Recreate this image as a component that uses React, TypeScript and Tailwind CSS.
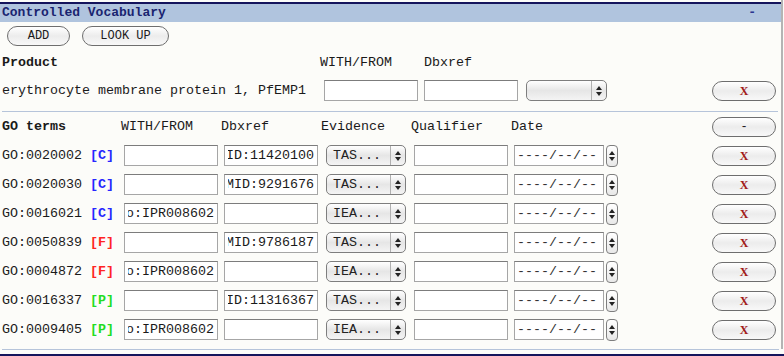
import React, { useEffect, useRef } from "react";

const mono = { fontFamily: '"Liberation Mono", "DejaVu Sans Mono", monospace' };

type Term = { id: string; aspect: "C" | "F" | "P"; withFrom: string; dbxref: string; evidence: string };

const terms: Term[] = [
  { id: "GO:0020002", aspect: "C", withFrom: "", dbxref: "PMID:11420100", evidence: "TAS..." },
  { id: "GO:0020030", aspect: "C", withFrom: "", dbxref: "PMID:9291676", evidence: "TAS..." },
  { id: "GO:0016021", aspect: "C", withFrom: "InterPro:IPR008602", dbxref: "", evidence: "IEA..." },
  { id: "GO:0050839", aspect: "F", withFrom: "", dbxref: "PMID:9786187", evidence: "TAS..." },
  { id: "GO:0004872", aspect: "F", withFrom: "InterPro:IPR008602", dbxref: "", evidence: "IEA..." },
  { id: "GO:0016337", aspect: "P", withFrom: "", dbxref: "PMID:11316367", evidence: "TAS..." },
  { id: "GO:0009405", aspect: "P", withFrom: "InterPro:IPR008602", dbxref: "", evidence: "IEA..." },
];

const aspectColor = {
  C: "text-[#2626ff]",
  F: "text-[#ff2424]",
  P: "text-[#22dd22]",
};

function Arrows() {
  return (
    <svg width="6" height="10" viewBox="0 0 6 10">
      <path d="M3 0 L6 4 L0 4 Z" fill="#222" />
      <path d="M0 6 L6 6 L3 10 Z" fill="#222" />
    </svg>
  );
}

function TextBox({ value = "", w = "w-[94px]" }: { value?: string; w?: string }) {
  const ref = useRef<HTMLInputElement>(null);
  // long values show their tail, as a field does after typing
  useEffect(() => {
    if (ref.current) ref.current.scrollLeft = ref.current.scrollWidth;
  }, [value]);
  return (
    <input
      ref={ref}
      readOnly
      defaultValue={value}
      className={`${w} h-[21px] shrink-0 bg-white border border-[#a6a6a6] border-t-[#7c7c7c] px-[3px] text-[13.33px] text-[#1a1a1a] outline-none`}
      style={mono}
    />
  );
}

function Select({ label = "", w = "w-[80px]" }: { label?: string; w?: string }) {
  return (
    <div
      className={`${w} h-[21px] shrink-0 rounded-[5px] border border-[#7e7e7e] bg-gradient-to-b from-[#ffffff] via-[#e6e6e6] to-[#f4f4f4] flex items-center`}
    >
      <span className="flex-1 pl-[6px] text-[13.33px] text-[#222] whitespace-nowrap overflow-hidden">{label}</span>
      <span className="w-[15px] h-full border-l border-[#b0b0b0] flex items-center justify-center">
        <Arrows />
      </span>
    </div>
  );
}

function Pill({ children, w, className = "" }: { children: React.ReactNode; w: string; className?: string }) {
  return (
    <button
      className={`${w} h-[20px] shrink-0 rounded-full border border-[#6e6e6e] bg-gradient-to-b from-[#ffffff] via-[#ececec] to-[#f8f8f8] flex items-center justify-center text-[12px] leading-none ${className}`}
      style={mono}
    >
      {children}
    </button>
  );
}

function DelButton() {
  return (
    <Pill w="w-[64px]" className="ml-auto">
      <span className="text-[#a11a1a] font-bold text-[12px]" style={{ fontFamily: '"Liberation Serif", serif' }}>
        X
      </span>
    </Pill>
  );
}

function DateBox() {
  return (
    <div className="flex items-center gap-[2px] shrink-0">
      <div className="w-[90px] h-[21px] bg-white border border-[#a6a6a6] border-t-[#7c7c7c] flex items-center pl-[2px] text-[13.33px] text-[#333] whitespace-nowrap">
        ----/--/--
      </div>
      <div className="w-[12px] h-[22px] rounded-[4px] border border-[#7e7e7e] bg-gradient-to-b from-white to-[#e8e8e8] flex items-center justify-center">
        <Arrows />
      </div>
    </div>
  );
}

export default function App() {
  return (
    <div className="w-[784px] h-[356px] bg-[#fcfcf9] overflow-hidden text-[13.33px] text-[#1a1a1a]" style={mono}>
      <div className="w-[783px] border-r-2 border-[#b4b4b4] pt-[2px] pr-[5px] pb-[5px]">
        {/* header */}
        <div className="-mr-[5px] border-t-2 border-[#14145c] bg-[#b0c4de] h-[20px] flex items-center pl-[2px] pr-[25px]">
          <span className="font-bold text-[#1a2470] text-[13px]">Controlled Vocabulary</span>
          <span className="ml-auto font-bold text-[#2a3590] text-[13px]">-</span>
        </div>

        <div className="flex gap-[12px] pl-[7px] mt-[4px]">
          <Pill w="w-[63px]">ADD</Pill>
          <Pill w="w-[87px]">LOOK UP</Pill>
        </div>

        {/* product */}
        <div className="flex items-center h-[16px] mt-[9px] pl-[2px]">
          <span className="w-[318px] font-bold">Product</span>
          <span className="w-[104px]">WITH/FROM</span>
          <span>Dbxref</span>
        </div>
        <div className="flex items-center h-[21px] mt-[9px] pl-[2px]">
          <span className="w-[322px] whitespace-nowrap">erythrocyte membrane protein 1, PfEMP1</span>
          <TextBox />
          <span className="w-[6px]" />
          <TextBox />
          <span className="w-[8px]" />
          <Select w="w-[81px]" />
          <DelButton />
        </div>

        <div className="h-px bg-[#b6c4da] mt-[10px] ml-[2px] mr-[-2px]" />

        {/* GO terms */}
        <div className="flex items-center h-[21px] mt-[4px] pl-[2px]">
          <span className="w-[119px] font-bold">GO terms</span>
          <span className="w-[100px]">WITH/FROM</span>
          <span className="w-[100px]">Dbxref</span>
          <span className="w-[90px]">Evidence</span>
          <span className="w-[100px]">Qualifier</span>
          <span>Date</span>
          <Pill w="w-[64px]" className="ml-auto text-[#222]">
            -
          </Pill>
        </div>

        <div className="mt-[4px]">
          {terms.map((t) => (
            <div key={t.id} className="flex items-center h-[29px] pl-[2px]">
              <span className="w-[122px] whitespace-pre">
                {t.id}{" "}
                <b className={aspectColor[t.aspect]}>[{t.aspect}]</b>
              </span>
              <TextBox value={t.withFrom} />
              <span className="w-[6px]" />
              <TextBox value={t.dbxref} />
              <span className="w-[8px]" />
              <Select label={t.evidence} />
              <span className="w-[8px]" />
              <TextBox />
              <span className="w-[6px]" />
              <DateBox />
              <DelButton />
            </div>
          ))}
        </div>
      </div>
      <div className="h-px bg-[#b6c4da] ml-[2px] w-[777px]" />
      <div className="h-[2px] bg-[#14145c] mt-[4px]" />
    </div>
  );
}
